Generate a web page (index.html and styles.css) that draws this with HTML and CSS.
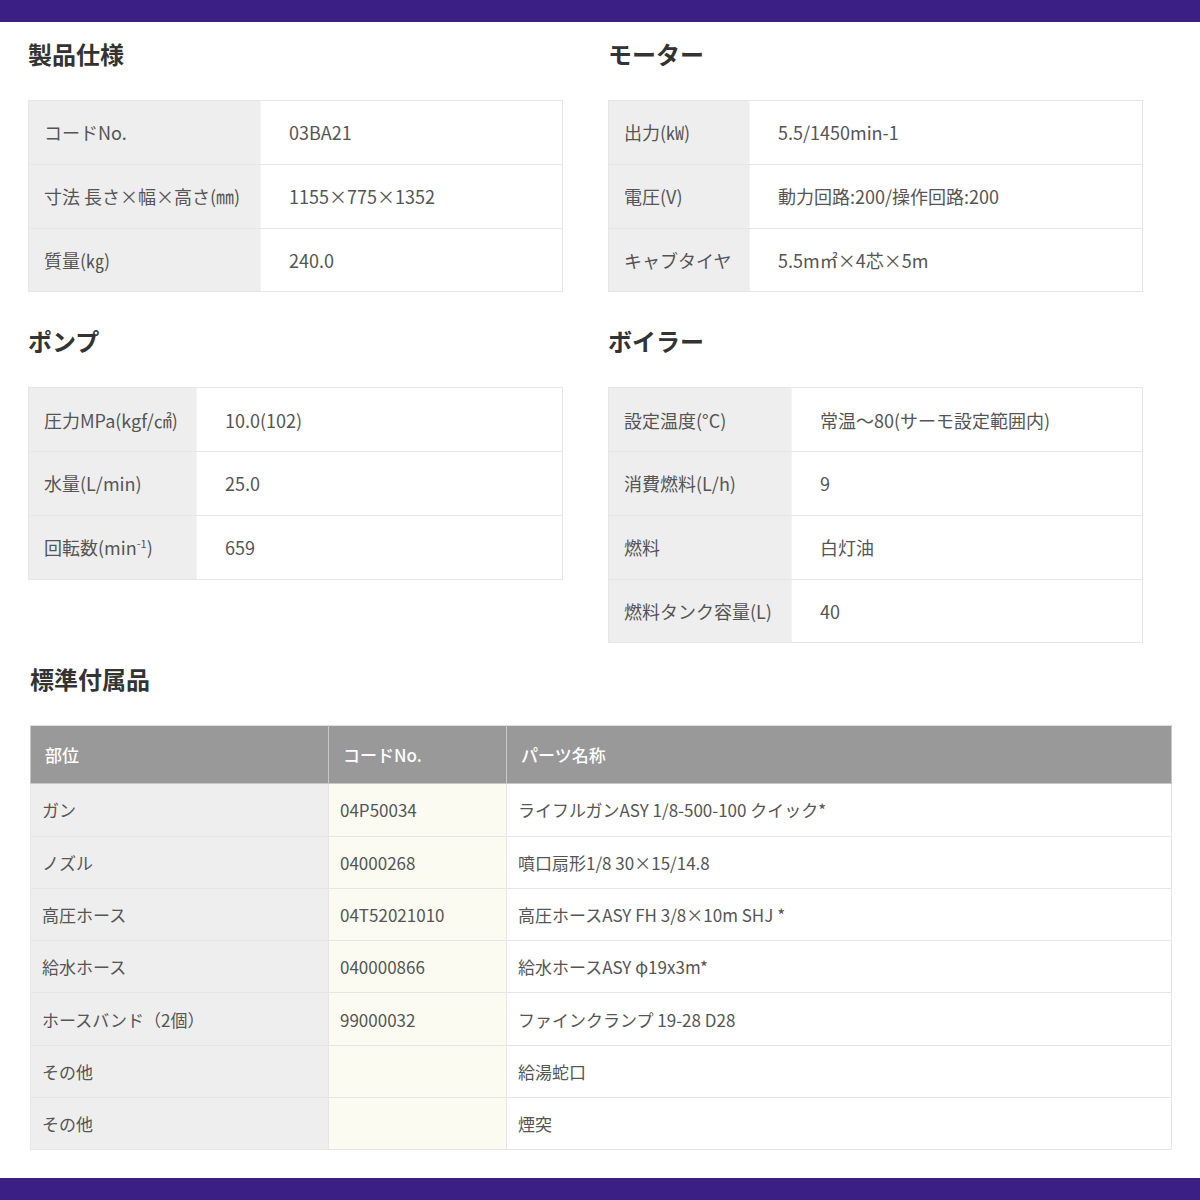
FILE: index.html
```html
<!DOCTYPE html>
<html lang="ja">
<head>
<meta charset="utf-8">
<link rel="stylesheet" href="styles.css">
</head>
<body>
<div class="bar"></div>
<main class="page">
  <div class="grid">
    <section class="sec">
      <h2 class="ttl">製品仕様</h2>
      <table class="spec">
        <colgroup><col class="c-spec"><col></colgroup>
        <tr><th>コードNo.</th><td>03BA21</td></tr>
        <tr><th>寸法 長さ×幅×高さ(㎜)</th><td>1155×775×1352</td></tr>
        <tr><th>質量(㎏)</th><td>240.0</td></tr>
      </table>
    </section>
    <section class="sec">
      <h2 class="ttl">モーター</h2>
      <table class="spec">
        <colgroup><col class="c-motor"><col></colgroup>
        <tr><th>出力(㎾)</th><td>5.5/1450min-1</td></tr>
        <tr><th>電圧(V)</th><td>動力回路:200/操作回路:200</td></tr>
        <tr><th>キャブタイヤ</th><td>5.5m㎡×4芯×5m</td></tr>
      </table>
    </section>
    <section class="sec">
      <h2 class="ttl">ポンプ</h2>
      <table class="spec">
        <colgroup><col class="c-pump"><col></colgroup>
        <tr><th>圧力MPa(kgf/㎠)</th><td>10.0(102)</td></tr>
        <tr><th>水量(L/min)</th><td>25.0</td></tr>
        <tr><th>回転数(min<sup>-1</sup>)</th><td>659</td></tr>
      </table>
    </section>
    <section class="sec">
      <h2 class="ttl">ボイラー</h2>
      <table class="spec">
        <colgroup><col class="c-boiler"><col></colgroup>
        <tr><th>設定温度(°C)</th><td>常温～80(サーモ設定範囲内)</td></tr>
        <tr><th>消費燃料(L/h)</th><td>9</td></tr>
        <tr><th>燃料</th><td>白灯油</td></tr>
        <tr><th>燃料タンク容量(L)</th><td>40</td></tr>
      </table>
    </section>
  </div>
  <section class="sec acc">
    <h2 class="ttl">標準付属品</h2>
    <table class="parts">
      <colgroup><col class="c-part"><col class="c-code"><col></colgroup>
      <thead>
        <tr><th>部位</th><th>コードNo.</th><th>パーツ名称</th></tr>
      </thead>
      <tbody>
        <tr><td class="p">ガン</td><td class="k">04P50034</td><td>ライフルガンASY 1/8-500-100 クイック*</td></tr>
        <tr><td class="p">ノズル</td><td class="k">04000268</td><td>噴口扇形1/8 30×15/14.8</td></tr>
        <tr><td class="p">高圧ホース</td><td class="k">04T52021010</td><td>高圧ホースASY FH 3/8×10m SHJ *</td></tr>
        <tr><td class="p">給水ホース</td><td class="k">040000866</td><td>給水ホースASY φ19x3m*</td></tr>
        <tr><td class="p">ホースバンド（2個）</td><td class="k">99000032</td><td>ファインクランプ 19-28 D28</td></tr>
        <tr><td class="p">その他</td><td class="k"></td><td>給湯蛇口</td></tr>
        <tr><td class="p">その他</td><td class="k"></td><td>煙突</td></tr>
      </tbody>
    </table>
  </section>
</main>
<div class="bar bar-bottom"></div>
</body>
</html>
```
FILE: styles.css
```css
* { box-sizing: border-box; }
html, body {
  margin: 0;
  padding: 0;
  background: #fff;
  font-family: "Noto Sans CJK JP", "Noto Sans", sans-serif;
  color: #555;
}
body {
  width: 1200px;
  height: 1200px;
  display: flex;
  flex-direction: column;
}
.bar {
  height: 22px;
  background: #3c1f84;
  flex: none;
}
.bar-bottom { margin-top: auto; }
.page {
  padding: 16px 0 0 28px;
}
.grid {
  display: grid;
  grid-template-columns: 535px 535px;
  column-gap: 45px;
  row-gap: 33px;
  align-items: start;
}
.ttl {
  margin: 0 0 30px 0;
  font-size: 24px;
  line-height: 32px;
  font-weight: 700;
  color: #333;
}
.spec {
  width: 535px;
  border-collapse: collapse;
  font-size: 18px;
}
.spec th, .spec td {
  height: 63.75px;
  border: 1px solid #e6e6e6;
  text-align: left;
  font-weight: 400;
  padding: 0 0 0 28px;
  color: #555;
  vertical-align: middle;
  white-space: nowrap;
}
.spec th {
  background: #eeeeee;
  padding-left: 15px;
  border-right: 1px solid #f3f3f3;
}
.spec sup {
  font-size: 11px;
  line-height: 0;
}
.c-spec { width: 232px; }
.c-motor { width: 141px; }
.c-pump { width: 168px; }
.c-boiler { width: 183px; }
.acc {
  margin-top: 20px;
  padding-left: 2px;
}
.parts {
  width: 1142px;
  border-collapse: collapse;
  font-size: 17px;
}
.c-part { width: 298px; }
.c-code { width: 178px; }
.parts th {
  background: #999999;
  color: #fff;
  font-weight: 500;
  text-align: left;
  height: 58px;
  padding: 0 0 0 14px;
  border: 1px solid #c8c8c8;
  border-top-color: #e0e0e0;
}
.parts td {
  height: 52.3px;
  padding: 0 0 0 11px;
  border: 1px solid #e6e6e6;
  color: #555;
  vertical-align: middle;
}
.parts td.p {
  background: #eeeeee;
}
.parts td.k {
  background: #fbfbf2;
}
```
